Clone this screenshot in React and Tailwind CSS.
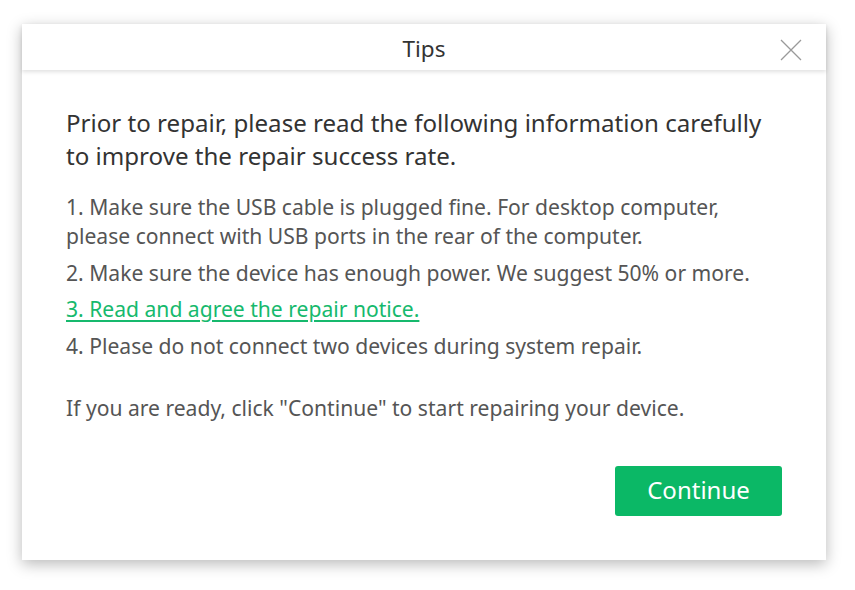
export default function App() {
  return (
    <div className="w-[855px] h-[590px] bg-white pt-[24px] pl-[22px]" style={{ fontFamily: '"Noto Sans", "Open Sans", sans-serif' }}>
      <div className="w-[804px] h-[536px] bg-white shadow-[0_4px_14px_rgba(0,0,0,0.28)] flex flex-col">
        {/* Header */}
        <div className="relative h-[46px] flex items-center justify-center shadow-[0_2px_4px_rgba(0,0,0,0.12)]">
          <span className="text-[22.5px] text-[#333] leading-none pt-[4px]">Tips</span>
          <button className="absolute right-[24px] top-[15px] w-[22px] h-[22px] text-[#9a9a9a]">
            <svg viewBox="0 0 22 22" className="w-[22px] h-[22px]" fill="none" stroke="currentColor" strokeWidth="1.3">
              <path d="M1 1L21 21M21 1L1 21" />
            </svg>
          </button>
        </div>

        {/* Body */}
        <div className="flex-1 flex flex-col pl-[44px] pr-[20px] pt-[36px]">
          <h2 className="text-[24.1px] leading-[33px] text-[#333] font-normal whitespace-nowrap">
            Prior to repair, please read the following information carefully<br />
            to improve the repair success rate.
          </h2>
          <ul className="mt-[20px] flex flex-col gap-[7.5px] text-[21.1px] leading-[29px] text-[#555] whitespace-nowrap">
            <li>
              1. Make sure the USB cable is plugged fine. For desktop computer,<br />
              please connect with USB ports in the rear of the computer.
            </li>
            <li>2. Make sure the device has enough power. We suggest 50% or more.</li>
            <li>
              <a href="#" className="text-[#16b96d] underline underline-offset-[3px]">3. Read and agree the repair notice.</a>
            </li>
            <li>4. Please do not connect two devices during system repair.</li>
          </ul>
          <p className="mt-[33px] text-[21.1px] leading-[29px] text-[#555] whitespace-nowrap">
            If you are ready, click "Continue" to start repairing your device.
          </p>
          <div className="flex justify-end mt-[44px] pr-[24px]">
            <button className="w-[167px] h-[50px] rounded-[3px] bg-[#0bb866] text-white text-[24px] leading-none pb-[1px]">Continue</button>
          </div>
        </div>
      </div>
    </div>
  );
}
